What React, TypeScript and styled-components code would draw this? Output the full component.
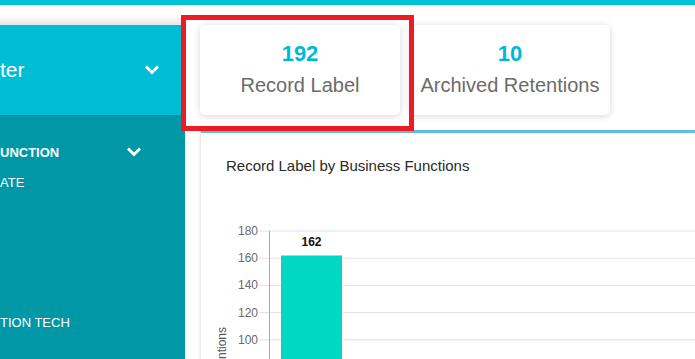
import * as React from 'react';
import { createGlobalStyle, styled } from 'styled-components';

const GlobalStyle = createGlobalStyle`
  html, body {
    margin: 0;
    padding: 0;
    background: #ffffff;
    overflow: hidden;
    font-family: "Liberation Sans", Arial, sans-serif;
  }
`;

const Page = styled.div`
  width: 695px;
  height: 359px;
  display: flex;
  flex-direction: column;
  overflow: hidden;
`;

const TopBar = styled.div`
  height: 5px;
  background-color: #00c4d6;
  flex-shrink: 0;
`;

const Layout = styled.div`
  flex: 1;
  display: flex;
  min-height: 0;
`;

const Sidebar = styled.aside`
  width: 185px;
  flex-shrink: 0;
  display: flex;
  flex-direction: column;
  overflow: hidden;
`;

const SidebarShade = styled.div`
  height: 20px;
  background: linear-gradient(#ffffff 55%, #e4e4e4);
`;

const SidebarHeader = styled.div`
  height: 90px;
  display: flex;
  align-items: center;
  justify-content: space-between;
  padding-right: 21px;
  background-color: #00bcd4;
  color: #ffffff;
  font-size: 21px;
`;

const SidebarBody = styled.div`
  flex: 1;
  background-color: #0097a7;
  color: #ffffff;
  padding-top: 25px;
`;

const GroupRow = styled.div`
  height: 24px;
  display: flex;
  align-items: center;
  justify-content: space-between;
  padding-right: 39px;
  font-size: 13px;
  font-weight: bold;
`;

const NavList = styled.div`
  padding-top: 4px;
`;

const NavItem = styled.div`
  height: 28px;
  display: flex;
  align-items: center;
  font-size: 13px;
`;

const Main = styled.main`
  flex: 1;
  padding: 20px 0 0 15px;
  display: flex;
  flex-direction: column;
  gap: 15px;
  min-width: 0;
`;

const Cards = styled.div`
  display: flex;
  gap: 10px;
`;

const CardSlot = styled.div`
  position: relative;
`;

const Card = styled.div`
  width: 200px;
  height: 90px;
  box-sizing: border-box;
  background: #ffffff;
  border-radius: 5px;
  box-shadow: 0 1px 7px rgba(0, 0, 0, 0.16);
  display: flex;
  flex-direction: column;
  align-items: center;
  justify-content: center;
  gap: 4px;
`;

const CardValue = styled.div`
  color: #00b9d6;
  font-size: 22px;
  font-weight: bold;
  line-height: 26px;
`;

const CardLabel = styled.div`
  color: #6b6b6b;
  font-size: 20px;
  line-height: 28px;
`;

const Highlight = styled.div`
  position: absolute;
  left: -19px;
  top: -10px;
  width: 233px;
  height: 116px;
  box-sizing: border-box;
  border: 5px solid #ed1c24;
  z-index: 2;
  pointer-events: none;
`;

const ChartPanel = styled.section`
  flex: 1;
  border-top: 3px solid #5ec0d8;
  border-left: 1px solid #ececec;
  box-shadow: -1px 0 3px rgba(0, 0, 0, 0.06);
  padding-top: 23px;
`;

const ChartTitle = styled.div`
  margin-left: 25px;
  font-size: 15px;
  color: #2a2a2a;
  line-height: 20px;
`;

const ChartSvg = styled.svg`
  display: block;
  margin-top: 9px;
  overflow: visible;
`;

const Chevron = ({ size }: { size: number }) => (
  <svg width={size} height={size} viewBox="0 0 24 24" fill="none" stroke="#ffffff" strokeWidth={2.8} strokeLinecap="square">
    <path d="m7 9.5 5 5 5-5" />
  </svg>
);

const ticks = [180, 160, 140, 120, 100];

const BarChart = () => {
  const top = 46;
  const step = 27.2;
  const yFor = (v: number) => top + ((180 - v) / 20) * step;
  return (
    <ChartSvg width={495} height={170}>
      {ticks.map((t) => (
        <g key={t}>
          <line x1={58} x2={495} y1={yFor(t)} y2={yFor(t)} stroke="#e2e2e2" strokeWidth={1} />
          <text x={57} y={yFor(t) + 4} textAnchor="end" fontSize={12} fill="#6a6a6a" fontFamily="Liberation Sans, Arial, sans-serif">
            {t}
          </text>
        </g>
      ))}
      <line x1={68.5} x2={68.5} y1={top} y2={200} stroke="#a8a8a8" strokeWidth={1} />
      <rect x={80} y={yFor(162)} width={61} height={200 - yFor(162)} fill="#00d8c4" />
      <text x={110.5} y={yFor(162) - 9} textAnchor="middle" fontSize={12} fontWeight="bold" fill="#111" fontFamily="Liberation Sans, Arial, sans-serif">
        162
      </text>
      <text
        transform="translate(25 142) rotate(-90)"
        textAnchor="end"
        fontSize={12}
        fill="#555"
        fontFamily="Liberation Sans, Arial, sans-serif"
      >
        No. of Retentions
      </text>
    </ChartSvg>
  );
};

const navItems = ['ATE', '', '', '', '', 'TION TECH'];

export default function App() {
  return (
    <Page>
      <GlobalStyle />
      <TopBar />
      <Layout>
        <Sidebar>
          <SidebarShade />
          <SidebarHeader>
            <span>ter</span>
            <Chevron size={24} />
          </SidebarHeader>
          <SidebarBody>
            <GroupRow>
              <span>UNCTION</span>
              <Chevron size={24} />
            </GroupRow>
            <NavList>
              {navItems.map((item, i) => (
                <NavItem key={i}>{item}</NavItem>
              ))}
            </NavList>
          </SidebarBody>
        </Sidebar>
        <Main>
          <Cards>
            <CardSlot>
              <Card>
                <CardValue>192</CardValue>
                <CardLabel>Record Label</CardLabel>
              </Card>
              <Highlight />
            </CardSlot>
            <CardSlot>
              <Card>
                <CardValue>10</CardValue>
                <CardLabel>Archived Retentions</CardLabel>
              </Card>
            </CardSlot>
          </Cards>
          <ChartPanel>
            <ChartTitle>Record Label by Business Functions</ChartTitle>
            <BarChart />
          </ChartPanel>
        </Main>
      </Layout>
    </Page>
  );
}
